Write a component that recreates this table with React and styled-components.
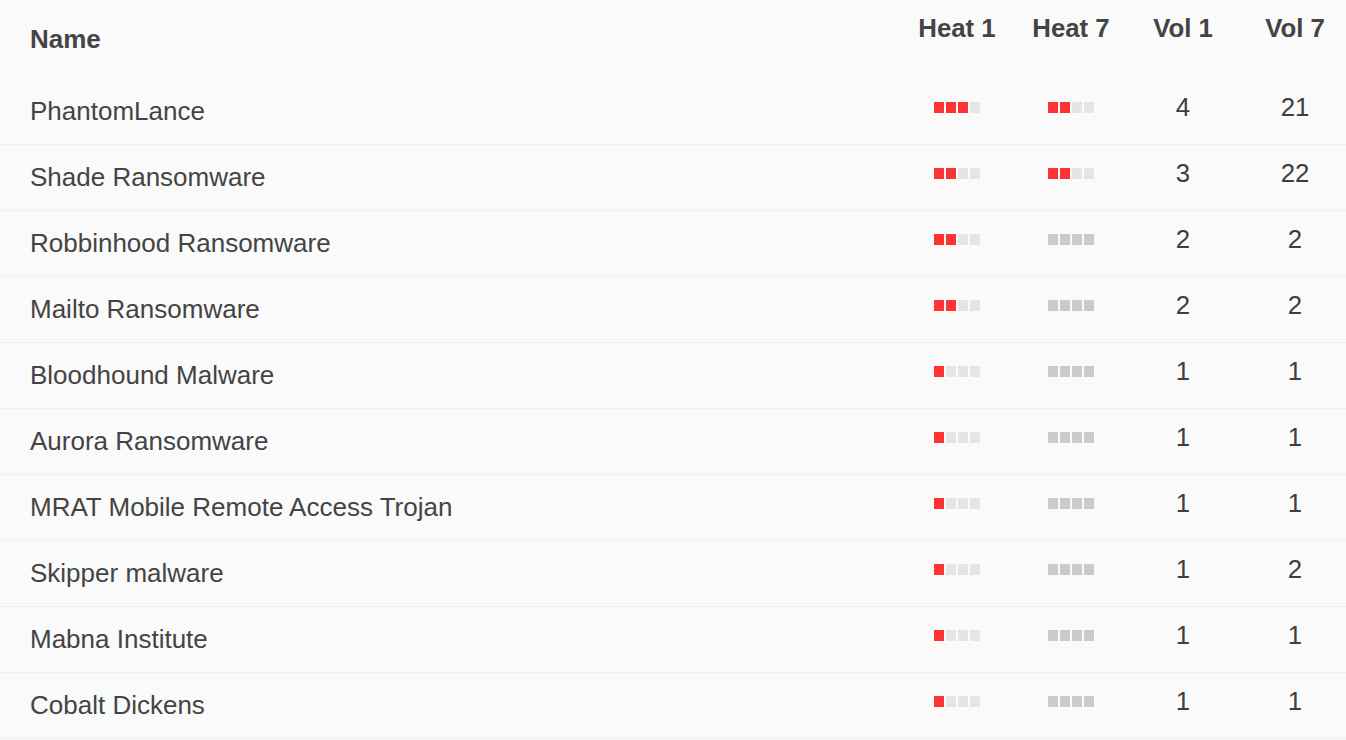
import React from "react";
import styled, { createGlobalStyle } from "styled-components";

const Global = createGlobalStyle`
  html, body { margin: 0; padding: 0; background: #fafafa; }
  body { font-family: "Liberation Sans", Arial, Helvetica, sans-serif; color: #444; }
`;

const Table = styled.div`
  width: 1346px;
  background: #fafafa;
`;

const Row = styled.div`
  display: grid;
  grid-template-columns: 1fr 116px 112px 112px 112px;
  height: ${(p) => (p.$head ? "79px" : "65px")};
  border-bottom: ${(p) => (p.$head ? "none" : "1px solid #efefef")};
`;

const NameCell = styled.div`
  display: flex;
  align-items: center;
  padding-left: 30px;
  font-size: 26px;
  font-weight: ${(p) => (p.$head ? 700 : 400)};
  color: #444;
  white-space: nowrap;
`;

const NumCell = styled.div`
  display: flex;
  align-items: center;
  justify-content: center;
  padding-left: 10px;
  padding-bottom: ${(p) => (p.$head ? "23px" : "9px")};
  font-size: 25.8px;
  font-weight: ${(p) => (p.$head ? 700 : 400)};
  color: ${(p) => (p.$head ? "#444" : "#3e3e3e")};
  white-space: nowrap;
`;

const Bars = styled.div`
  display: flex;
  gap: 2px;
`;

const Square = styled.span`
  width: 10px;
  height: 11px;
  background: ${(p) => p.$color};
`;

function Heat({ level }) {
  const none = level === 0;
  return (
    <Bars>
      {[0, 1, 2, 3].map((i) => (
        <Square
          key={i}
          $color={none ? "#cbcbcb" : i < level ? "#ff3333" : "#e5e5e5"}
        />
      ))}
    </Bars>
  );
}

const data = [
  ["PhantomLance", 3, 2, 4, 21],
  ["Shade Ransomware", 2, 2, 3, 22],
  ["Robbinhood Ransomware", 2, 0, 2, 2],
  ["Mailto Ransomware", 2, 0, 2, 2],
  ["Bloodhound Malware", 1, 0, 1, 1],
  ["Aurora Ransomware", 1, 0, 1, 1],
  ["MRAT Mobile Remote Access Trojan", 1, 0, 1, 1],
  ["Skipper malware", 1, 0, 1, 2],
  ["Mabna Institute", 1, 0, 1, 1],
  ["Cobalt Dickens", 1, 0, 1, 1],
];

export default function App() {
  return (
    <>
      <Global />
      <Table>
        <Row $head>
          <NameCell $head>Name</NameCell>
          <NumCell $head>Heat 1</NumCell>
          <NumCell $head>Heat 7</NumCell>
          <NumCell $head>Vol 1</NumCell>
          <NumCell $head>Vol 7</NumCell>
        </Row>
        {data.map(([name, h1, h7, v1, v7]) => (
          <Row key={name}>
            <NameCell>{name}</NameCell>
            <NumCell>
              <Heat level={h1} />
            </NumCell>
            <NumCell>
              <Heat level={h7} />
            </NumCell>
            <NumCell>{v1}</NumCell>
            <NumCell>{v7}</NumCell>
          </Row>
        ))}
      </Table>
    </>
  );
}
